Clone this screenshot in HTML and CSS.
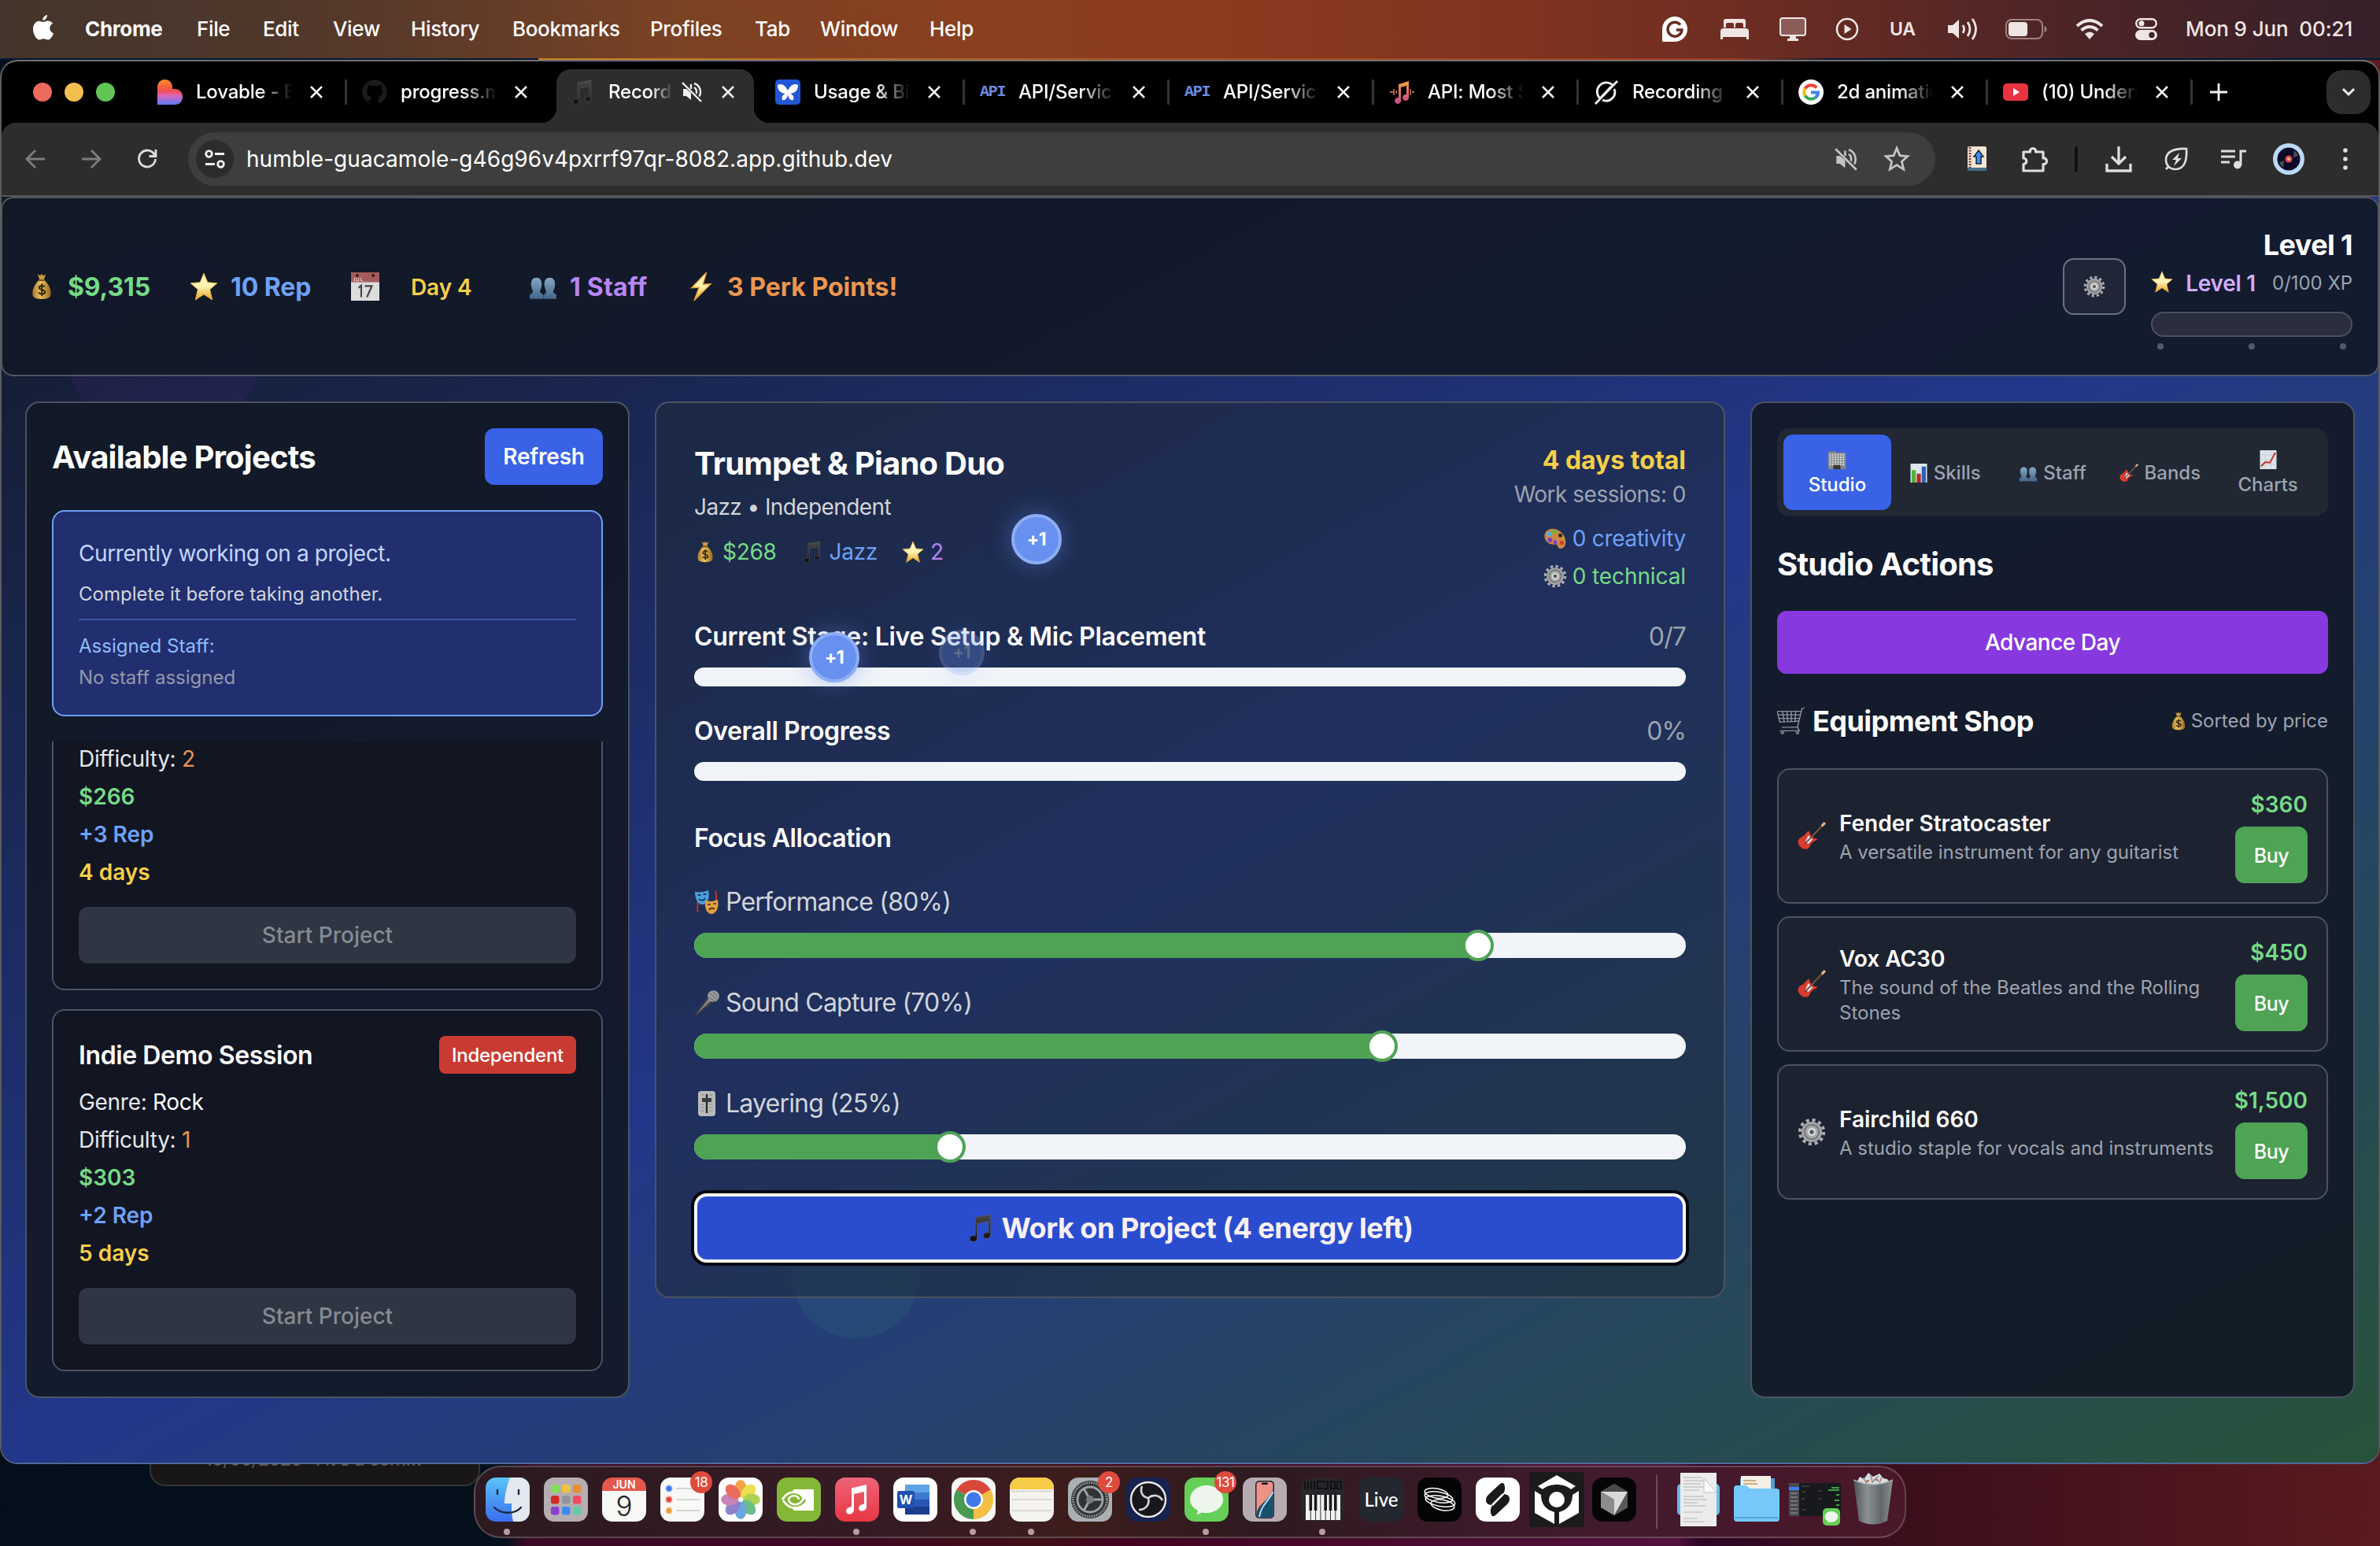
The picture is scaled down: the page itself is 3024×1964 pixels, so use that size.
FILE: index.html
```html
<!DOCTYPE html>
<html lang="en">
<head>
<meta charset="utf-8">
<title>Recording Studio Tycoon</title>
<link rel="stylesheet" href="styles.css">
</head>
<body>
<svg class="sprite" aria-hidden="true">
  <defs>
    <linearGradient id="gGold" x1="0" y1="0" x2="0" y2="1"><stop offset="0" stop-color="#fff7c4"/><stop offset=".5" stop-color="#fdf3b4"/><stop offset="1" stop-color="#e8a020"/></linearGradient>
    <linearGradient id="gBag" x1="0" y1="0" x2="1" y2="0"><stop offset="0" stop-color="#a87a2c"/><stop offset=".45" stop-color="#ecc463"/><stop offset="1" stop-color="#94661e"/></linearGradient>
    <linearGradient id="gNote" x1="0" y1="0" x2="0" y2="1"><stop offset="0" stop-color="#4a4a4a"/><stop offset="1" stop-color="#0c0c10"/></linearGradient>
    <linearGradient id="gStaff" x1="0" y1="0" x2="0" y2="1"><stop offset="0" stop-color="#86a7c2"/><stop offset="1" stop-color="#43668c"/></linearGradient>
    <linearGradient id="gLove" x1="0" y1="0" x2="0" y2="1"><stop offset="0" stop-color="#f98a2b"/><stop offset=".45" stop-color="#f0504e"/><stop offset=".65" stop-color="#d667c0"/><stop offset="1" stop-color="#5b7bf5"/></linearGradient>
    <linearGradient id="gSunset" x1="0" y1="0" x2="0" y2="1"><stop offset="0" stop-color="#f2a03d"/><stop offset="1" stop-color="#c4458c"/></linearGradient>
    <linearGradient id="gTrash" x1="0" y1="0" x2="1" y2="0"><stop offset="0" stop-color="#4d5256"/><stop offset=".35" stop-color="#8c9196"/><stop offset=".7" stop-color="#62676b"/><stop offset="1" stop-color="#8a8f94"/></linearGradient>
  </defs>
  <symbol id="bag" viewBox="0 0 32 32"><path d="M11 1l3 2 2-2 2 2 3-2-2.500 7h-5z" fill="#c99a44"/><path d="M13 8h6c5 5 8 10 8 16 0 5-3 7-11 7S5 29 5 24c0-6 3-11 8-16z" fill="url(#gBag)"/><path d="M12.500 8.500h7" stroke="#7c5519" stroke-width="2"/><path d="M19.500 16.500c-1-2-6.500-2-6.500 1 0 3.500 7 1.500 7 5 0 3-6.500 3-7.500.500M16.200 12.500v15" stroke="#3a2a0c" stroke-width="2" fill="none"/></symbol>
  <symbol id="star" viewBox="0 0 32 32"><path d="M16 1l4.300 10.300L31 12.200l-8.200 7.200L25.500 31 16 24.800 6.500 31l2.700-11.600L1 12.200l10.700-.900z" fill="url(#gGold)" stroke="#eeb53c" stroke-width=".8"/></symbol>
  <symbol id="cal" viewBox="0 0 32 32"><path d="M0 0h32v32H0z" fill="#dcdcdc"/><path d="M0 0h32v11H0z" fill="#a35c5c"/><circle cx="7" cy="3.500" r="1.800" fill="#3c1d1d"/><circle cx="25" cy="3.500" r="1.800" fill="#3c1d1d"/><path d="M4 6v3.500H2.500M6 6v3.500h2.500V6M11 6v3.500h2.500" stroke="#e3b9b9" fill="none"/><path d="M8.500 17.500L11.500 15v13M15.500 15.500h8L18 28" stroke="#444" stroke-width="1.900" fill="none"/></symbol>
  <symbol id="staff" viewBox="0 0 32 32"><path d="M8.500 6c4 0 6 3 6 7 0 5-2 7-2 9 0 2 4 2 4 4v4H1v-4c0-2 3.500-2 3.500-4 0-2-2-4-2-9 0-4 2-7 6-7z" fill="url(#gStaff)"/><path d="M23.500 6c4 0 6 3 6 7 0 5-2 7-2 9 0 2 3.500 2 3.500 4v4H17v-4c0-2 2.500-2 2.500-4 0-2-2-4-2-9 0-4 2-7 6-7z" fill="url(#gStaff)"/></symbol>
  <symbol id="bolt" viewBox="0 0 32 32"><path d="M21 0L4 17.500l8.500-.500L7 32l19-19-9 .500z" fill="url(#gGold)" stroke="#e79a2a" stroke-width="1.200"/></symbol>
  <symbol id="gear" viewBox="0 0 32 32"><circle cx="16" cy="16" r="13.500" fill="none" stroke="#a9abae" stroke-width="3.600" stroke-dasharray="3.700 3.370"/><circle cx="16" cy="16" r="11.600" fill="#a4a6a8"/><circle cx="16" cy="16" r="8.200" fill="none" stroke="#707275" stroke-width="1.600"/><circle cx="16" cy="16" r="4.800" fill="#d5d6d8"/><circle cx="16" cy="16" r="2.300" fill="#4f5154"/></symbol>
  <symbol id="note" viewBox="0 0 32 32"><path d="M10 4l17-3v23.500a4 3.400 0 1 1-2-3V8.500l-13 2.500v17a4.200 3.400 0 1 1-2-3z" fill="url(#gNote)" stroke="#5c5c60" stroke-width=".6"/></symbol>
  <symbol id="palette" viewBox="0 0 32 32"><path d="M14 3C5 2 0 9 2 16s10 9 14 8c3-.500 3 2 4 4 2 3 7 2 9-2C33 18 27 5 14 3z" fill="#c98b3f"/><circle cx="8" cy="10" r="3" fill="#42b4e6"/><circle cx="15" cy="7" r="2.800" fill="#5ac03b"/><circle cx="9" cy="18" r="3" fill="#7d3ad6"/><circle cx="16" cy="21" r="2.600" fill="#7d3ad6"/><circle cx="23" cy="12" r="2.600" fill="#302010"/><circle cx="25" cy="22" r="2.800" fill="#d53b33"/></symbol>
  <symbol id="masks" viewBox="0 0 32 32"><path d="M27 2c3 8-1 14 1 22M4 16c2 5-2 8 1 13" stroke="#b33a24" stroke-width="2" fill="none"/><path d="M1 3c6 1 12 0 17-2 2 9 0 17-7 18C5 20 1 12 1 3z" fill="#4b9fe0"/><path d="M4.500 7h4M11.500 6h4M6 12c3 3 6 2 8-1" stroke="#123" stroke-width="1.600" fill="none"/><path d="M14 14c5 2 11 1 16-1 2 10-2 18-8 18s-9-8-8-17z" fill="#e2a03f"/><path d="M17 19h4M24 18h4M19 26c2-3 5-3 7-1" stroke="#421" stroke-width="1.600" fill="none"/></symbol>
  <symbol id="mic" viewBox="0 0 32 32"><path d="M18 8l7 7L4 32l-4-1z" fill="#3c3c40"/><path d="M19 10l3 3L3 30z" fill="#85858a"/><circle cx="24.500" cy="7.500" r="7.300" fill="#98999c"/><path d="M20 4l9 8M24 2l6 6M19 9l7 5" stroke="#5d5e61"/></symbol>
  <symbol id="fader" viewBox="0 0 32 32"><rect x="5" y="0" width="22" height="32" rx="4" fill="#b9babc"/><path d="M8.500 5h4M8.500 9h4M8.500 17h4M8.500 21h4M8.500 25h4M19.500 5h4M19.500 9h4M19.500 17h4M19.500 21h4M19.500 25h4" stroke="#88898c" stroke-width="1.200"/><path d="M16 4v24" stroke="#28292b" stroke-width="2.400"/><rect x="10" y="9" width="12" height="5" rx="1" fill="#37383b"/></symbol>
  <symbol id="building" viewBox="0 0 32 32"><path d="M1 2h14v2h16v28H1z" fill="#85898a"/><path d="M4.500 6v20M9 6v20M13.500 6v20M18 6v20M22.500 6v20M27 6v20" stroke="#d4dadd" stroke-width="2.600" stroke-dasharray="3 1.200"/><path d="M10 25h12v7H10z" fill="#3b3632"/></symbol>
  <symbol id="bars" viewBox="0 0 32 32"><path d="M2 0h28v32H2z" fill="#dfe6ec"/><path d="M4 11h7v21H4z" fill="#50b33a"/><path d="M12.500 17h7v15h-7z" fill="#b52a22"/><path d="M21 5h7v27h-7z" fill="#2b62bf"/></symbol>
  <symbol id="guitar" viewBox="0 0 32 32"><path d="M15 18L28 4" stroke="#6f5138" stroke-width="2"/><path d="M26.500 3.500L30 0l2 2-4 4z" fill="#e7b98a"/><path d="M11 11c2-1 3 0 3 3l5 5c3-1 4 1 2 2-3 1-6 3-7 6-1 4-6 5-10 2s-5-8-1-11c4-2 6-4 8-7z" fill="#dd3a2e"/><path d="M12 15l5 5-5 5-3-3z" fill="#e8e4e0"/><path d="M8 25l8-8" stroke="#555" stroke-width="1.600"/></symbol>
  <symbol id="chart" viewBox="0 0 32 32"><path d="M2 0h28v32H2z" fill="#dde4ea"/><path d="M2 8h28M2 16h28M2 24h28M11 0v32M20 0v32" stroke="#c2ccd6"/><path d="M4 27l7-7 8 1 9-17" stroke="#c2332c" stroke-width="2.600" fill="none"/></symbol>
  <symbol id="cart" viewBox="0 0 32 32"><path d="M31 1l-3 1-5 21H5M0 5l3 12 22-1M0 5h27M6 5l2 12M11 5l1 12M16 5v12M21 5l-1 12M1 9h25M2 13h23M23 23l2 4H3" stroke="#8d9095" stroke-width="1.300" fill="none"/><circle cx="6" cy="29" r="2.200" fill="#6d7074"/><circle cx="23" cy="29" r="2.200" fill="#6d7074"/></symbol>
  <symbol id="close" viewBox="0 0 16 16"><path d="M1 1l14 14M15 1L1 15" stroke="#f2f2f2" stroke-width="2.500"/></symbol>
  <symbol id="mute" viewBox="0 0 28 28"><path d="M3 10h4l6 5v9l-6-5H3z" fill="currentColor"/><path d="M13 4v6M17 8c2 1 3 3 3 6 0 .800 0 1.500-.300 2M17 3c5 1 8 6 8 11 0 2-.500 4-1.500 5.500M2 2l24 24" stroke="currentColor" stroke-width="2.400" fill="none"/></symbol>
  <symbol id="chat" viewBox="0 0 56 56"><rect width="56" height="56" rx="13" fill="#66cf58"/><path d="M28 10c12 0 21 8 21 17.500S40 45 28 45c-2 0-4 0-6-.800-2 1.500-4 2.300-7 2.500 1.500-1.500 2-3 2-5-6-3-10-8-10-14C7 18 16 10 28 10z" fill="#eef5ec"/></symbol>
</svg>

<header class="menubar">
  <nav class="menus">
    <svg class="apple" viewBox="0 0 26 32"><path fill="#fff" d="M18 0c.300 3-2.500 6.800-5.600 6.800C12 3.700 15 .300 18 0zM13 9c1.500 0 3-1.500 6-1.500 2.500 0 4.800 1.300 6 3.300-5.500 3.200-4.500 10.500 1 12.600C24.500 27.500 21.800 31.500 19 31.500c-2.200 0-3-1.300-5.600-1.300s-3.500 1.300-5.400 1.300C4.500 31.500 0 24.500 0 18 0 11.500 3.800 7.700 7.800 7.700 10 7.700 11.800 9 13 9z"/></svg>
    <span class="app">Chrome</span><span>File</span><span>Edit</span><span>View</span><span>History</span><span>Bookmarks</span><span>Profiles</span><span>Tab</span><span>Window</span><span>Help</span>
  </nav>
  <div class="status">
    <svg width="32" height="32" viewBox="0 0 32 32"><path d="M16 0a16 16 0 1 1 0 32H0V16A16 16 0 0 1 16 0z" fill="#fff"/><path d="M23 10.500a9 9 0 1 0 2 6.500h-7" stroke="#6a2b23" stroke-width="3.400" fill="none"/></svg>
    <svg width="36" height="26" viewBox="0 0 36 26"><path d="M4 11V3q0-3 3-3h22q3 0 3 3v8h-3V7q0-2-2-2h-6q-2 0-2 2v4h-2V7q0-2-2-2H9Q7 5 7 7v4zM0 26V16q0-4 4-4h28q4 0 4 4v10h-3v-3H3v3z" fill="#efe6e4"/></svg>
    <svg width="34" height="30" viewBox="0 0 34 30"><rect x="1" y="1" width="32" height="22" rx="3" fill="#8b5e59" stroke="#efe6e4" stroke-width="2"/><path d="M13 23h8v4h3v3H10v-3h3z" fill="#efe6e4"/></svg>
    <svg width="30" height="30" viewBox="0 0 30 30"><circle cx="15" cy="15" r="13" fill="none" stroke="#efe6e4" stroke-width="2.500"/><path d="M11.500 9l9 6-9 6z" fill="#efe6e4"/></svg>
    <b>UA</b>
    <svg width="40" height="30" viewBox="0 0 40 30"><path d="M0 10h6l8-7v24l-8-7H0z" fill="#efe6e4"/><path d="M19 10q3 5 0 10M25 6q6 9 0 18M31 2q9 13 0 26" stroke="#efe6e4" stroke-width="2.800" fill="none"/></svg>
    <svg width="53" height="26" viewBox="0 0 53 26"><rect x="1" y="1" width="46" height="24" rx="7" fill="none" stroke="#a18280" stroke-width="2"/><rect x="4" y="4" width="24" height="18" rx="4" fill="#efe6e4"/><path d="M49.500 9q3 1 3 4t-3 4z" fill="#a18280"/></svg>
    <svg width="36" height="26" viewBox="0 0 36 26"><path d="M2 9q16-14 32 0M7.500 14.500q10.500-9 21 0" stroke="#efe6e4" stroke-width="4" fill="none"/><path d="M12 19q6-5 12 0l-6 7z" fill="#efe6e4"/></svg>
    <svg width="28" height="28" viewBox="0 0 28 28"><rect x="1.200" y="1.200" width="25.600" height="11" rx="5.500" fill="none" stroke="#efe6e4" stroke-width="2.400"/><circle cx="8" cy="6.700" r="3.500" fill="#efe6e4"/><rect y="15" width="28" height="13" rx="6.500" fill="#efe6e4"/><circle cx="21" cy="21.500" r="3.700" fill="#40222a"/></svg>
    <span class="clock">Mon 9 Jun&nbsp; 00:21</span>
  </div>
</header>

<div class="ghost"><span>10/06/2025&nbsp;&nbsp; I It's a com…</span></div>

<main class="window">
  <div class="tabstrip">
    <div class="lights"><i class="red"></i><i class="amber"></i><i class="green"></i></div>
    <div class="tab"><svg class="fav" viewBox="0 0 32 32"><path d="M0 10C0 4 4 0 9.500 0S19 4 19 10v2h3c6 0 10 4 10 10s-4 10-10 10H0z" fill="url(#gLove)"/></svg><span class="title">Lovable - Bu</span><svg class="x"><use href="#close"/></svg></div>
    <div class="tab"><svg class="fav" viewBox="0 0 32 32"><circle cx="16" cy="16" r="15.500" fill="#1c1c1e"/><path d="M11 31v-5c-4 1-5-2-6.500-3M21 31v-6c0-1.500-.500-2.500-1-3 4-.500 6-3 6-7 0-2-.500-3-1.500-4.200.300-1.500.200-3-.300-4-1.500 0-3 .700-4.200 1.700-2.500-.600-5.500-.600-8 0C10.800 7.500 9.300 6.800 7.800 6.800c-.500 1-.600 2.500-.300 4C6.500 12 6 13 6 15c0 4 2 6.500 6 7-.500.500-1 1.500-1 3v6z" fill="#000"/></svg><span class="title">progress.md</span><svg class="x"><use href="#close"/></svg></div>
    <div class="tab active"><svg class="fav"><use href="#note"/></svg><span class="title short">Recordin</span><svg class="tabmute"><use href="#mute"/></svg><svg class="x"><use href="#close"/></svg></div>
    <div class="tab"><svg class="fav" viewBox="0 0 32 32"><rect width="32" height="32" rx="5" fill="#2257d6"/><path d="M16 14C12 6 7 5 3 7c0 6 3 10 10 11-4 1-5 5-4 8 4 1 6-2 7-7 1 5 3 8 7 7 1-3 0-7-4-8 7-1 10-5 10-11-4-2-9-1-13 7z" fill="#fff"/></svg><span class="title">Usage &amp; Bil</span><svg class="x"><use href="#close"/></svg></div>
    <div class="tab"><span class="fav api">API</span><span class="title">API/Service</span><svg class="x"><use href="#close"/></svg></div>
    <div class="tab"><span class="fav api">API</span><span class="title">API/Service</span><svg class="x"><use href="#close"/></svg></div>
    <div class="tab"><svg class="fav" viewBox="0 0 32 32"><path d="M12 6l13-4v20a4 4 0 1 1-3-3V8l-7 2v16a4 4 0 1 1-3-3z" fill="url(#gSunset)"/><path d="M1 16h4M6 12v8M9 14v4M27 12v8M29 16h3" stroke="#b06a4a" stroke-width="1.800"/></svg><span class="title">API: Most Sta</span><svg class="x"><use href="#close"/></svg></div>
    <div class="tab"><svg class="fav" viewBox="0 0 32 32"><path d="M24 7A11 11 0 0 0 8 24M26 12A11 11 0 0 1 11 26M30 2L2 31M22 9L9 23" stroke="#eee" stroke-width="2.800" fill="none"/></svg><span class="title">Recording S</span><svg class="x"><use href="#close"/></svg></div>
    <div class="tab"><svg class="fav" viewBox="0 0 32 32"><circle cx="16" cy="16" r="16" fill="#fff"/><g fill="none" stroke-width="4"><path d="M23 10.500A9 9 0 0 0 8.500 11.500" stroke="#ea4335"/><path d="M8.500 11.500a9 9 0 0 0 0 9" stroke="#fbbc05"/><path d="M8.500 20.500A9 9 0 0 0 21.500 23" stroke="#34a853"/><path d="M21.500 23c2-1.500 3.500-4 3.500-6.500h-9" stroke="#4285f4"/></g></svg><span class="title">2d animatio</span><svg class="x"><use href="#close"/></svg></div>
    <div class="tab"><svg class="fav" viewBox="0 0 32 32"><rect y="5" width="32" height="22" rx="5" fill="#ea3340"/><path d="M13 11l8 5-8 5z" fill="#fff"/></svg><span class="title">(10) Unders</span><svg class="x"><use href="#close"/></svg></div>
    <svg class="plus" viewBox="0 0 22 22"><path d="M11 0v22M0 11h22" stroke="#f2f2f2" stroke-width="2.800"/></svg>
    <div class="tabsearch"><svg width="18" height="12" viewBox="0 0 18 12"><path d="M2 2l7 7 7-7" stroke="#eee" stroke-width="3" fill="none"/></svg></div>
  </div>

  <div class="toolbar">
    <svg class="nav dim" viewBox="0 0 26 26"><path d="M25 13H2M13 2L2 13l11 11" /></svg>
    <svg class="nav dim" viewBox="0 0 26 26"><path d="M1 13h23M13 2l11 11-11 11"/></svg>
    <svg class="nav" viewBox="0 0 26 26"><path d="M22.500 8A10.500 10.500 0 1 0 23.500 13M24 1v8.500h-8.500"/></svg>
    <div class="omnibox">
      <span class="site"><svg width="26" height="24" viewBox="0 0 26 24"><g fill="none" stroke="#f0f0f0" stroke-width="2.800"><circle cx="5.500" cy="5.500" r="3.800"/><path d="M13 5.500h12M1 18.500h12"/><circle cx="20.500" cy="18.500" r="3.800"/></g></svg></span>
      <span class="url">humble-guacamole-g46g96v4pxrrf97qr-8082.app.github.dev</span>
      <svg class="omute"><use href="#mute"/></svg>
      <svg class="ostar" viewBox="0 0 32 32"><path d="M16 3l3.700 9 9.300.800-7 6.200 2.200 9.300L16 23.200l-8.200 5.100L10 19l-7-6.200 9.300-.800z" fill="none" stroke="#c4c4c4" stroke-width="2.600"/></svg>
    </div>
    <div class="tools">
      <svg width="24" height="32" viewBox="0 0 24 32"><rect width="24" height="30" rx="2" fill="#f3e6d2"/><path d="M3 1v26" stroke="#7c3b48" stroke-width="3" stroke-dasharray="2 1.500"/><path d="M14 5l6 8h-3v9h-6v-9H8z" fill="#3f8cf0" stroke="#16233f" stroke-width="1.500"/><path d="M0 27h24v4H0z" fill="#47708a"/></svg>
      <svg width="34" height="34" viewBox="0 0 34 34"><path d="M2 8h8.500c-1-6 8-6 7 0H27v8c6-1 6 8.500 0 7.500V32H2v-8.500c5 0 5-7.500 0-7.500z" fill="none" stroke="#dedede" stroke-width="3.200" stroke-linejoin="round"/></svg>
      <i class="bar"></i>
      <svg width="34" height="34" viewBox="0 0 34 34"><path d="M17 1v21M8 14l9 9 9-9M2 23v9h30v-9" fill="none" stroke="#dedede" stroke-width="3.300"/></svg>
      <svg width="32" height="32" viewBox="0 0 32 32"><path d="M3 29l4-4M29 3C15 2 3 6 3 17c0 7 5 12 12 12C27 29 30 17 29 3z" fill="none" stroke="#dedede" stroke-width="2.700"/><path d="M20 8l-9 9h5l-3 8 10-10h-5z" fill="#dedede"/></svg>
      <svg width="32" height="26" viewBox="0 0 32 26"><path d="M0 3h18M0 10h18M0 17h11M25 21V3h7" fill="none" stroke="#dedede" stroke-width="3"/><circle cx="21" cy="20.500" r="5" fill="#dedede"/></svg>
      <svg width="40" height="40" viewBox="0 0 40 40"><circle cx="20" cy="20" r="20" fill="#bcd9f6"/><circle cx="20" cy="20" r="14.500" fill="#0c0b26"/><path d="M27 9a13 13 0 0 1 5 7l-6 2zM13 31a13 13 0 0 1-5-7l6-2z" fill="#4c4b5c"/><circle cx="20" cy="20" r="4.500" fill="#e2455c"/><circle cx="20" cy="20" r="1.800" fill="#ffd76a"/></svg>
      <svg width="6" height="28" viewBox="0 0 6 28"><circle cx="3" cy="3" r="2.800" fill="#dedede"/><circle cx="3" cy="14" r="2.800" fill="#dedede"/><circle cx="3" cy="25" r="2.800" fill="#dedede"/></svg>
    </div>
  </div>

  <div class="page">
    <i class="orb orb-a"></i><i class="orb orb-b"></i>
    <section class="hud">
      <div class="stats">
        <div class="stat s1"><svg><use href="#bag"/></svg><span class="green">$9,315</span></div>
        <div class="stat s2"><svg><use href="#star"/></svg><span class="blue">10 Rep</span></div>
        <div class="stat s3"><svg><use href="#cal"/></svg><span class="yellow">Day 4</span></div>
        <div class="stat s4"><svg><use href="#staff"/></svg><span class="purple">1 Staff</span></div>
        <div class="stat s5"><svg><use href="#bolt"/></svg><span class="orange">3 Perk Points!</span></div>
      </div>
      <div class="hudright">
        <button class="settings"><svg><use href="#gear"/></svg></button>
        <div class="level">
          <h2>Level 1</h2>
          <div class="xp"><svg><use href="#star"/></svg><b>Level 1</b><span>0/100 XP</span></div>
          <div class="xpbar"></div>
          <div class="ticks"><i></i><i></i><i></i></div>
        </div>
      </div>
    </section>

    <div class="columns">
      <section class="panel projects">
        <div class="head"><h2>Available Projects</h2><button class="refresh">Refresh</button></div>
        <div class="notice">
          <p class="lead">Currently working on a project.</p>
          <p class="sub">Complete it before taking another.</p>
          <div class="assigned"><p>Assigned Staff:</p><p class="none">No staff assigned</p></div>
        </div>
        <div class="list">
          <article class="job cut">
            <p>Difficulty: <span class="orange">2</span></p>
            <p class="green b">$266</p><p class="blue b">+3 Rep</p><p class="yellow b">4 days</p>
            <button>Start Project</button>
          </article>
          <article class="job">
            <div class="jobhead"><h3>Indie Demo Session</h3><span class="badge">Independent</span></div>
            <p>Genre: <span class="white">Rock</span></p>
            <p>Difficulty: <span class="orange">1</span></p>
            <p class="green b">$303</p><p class="blue b">+2 Rep</p><p class="yellow b">5 days</p>
            <button>Start Project</button>
          </article>
        </div>
      </section>

      <section class="panel work">
        <div class="workhead">
          <div class="wl">
            <h2>Trumpet &amp; Piano Duo</h2>
            <p class="kind">Jazz • Independent</p>
            <div class="meta"><span class="green"><svg><use href="#bag"/></svg>$268</span><span class="blue"><svg><use href="#note"/></svg>Jazz</span><span class="purple"><svg><use href="#star"/></svg>2</span></div>
          </div>
          <div class="wr">
            <p class="total">4 days total</p><p class="sessions">Work sessions: 0</p>
            <p class="pts blue"><svg><use href="#palette"/></svg>0 creativity</p>
            <p class="pts green tech"><svg><use href="#gear"/></svg>0 technical</p>
          </div>
        </div>
        <div class="row stage"><span>Current Stage: Live Setup &amp; Mic Placement</span><em>0/7</em></div>
        <div class="track"></div>
        <div class="row overall"><span>Overall Progress</span><em>0%</em></div>
        <div class="track"></div>
        <h3 class="focus">Focus Allocation</h3>
        <div class="slider"><label><svg><use href="#masks"/></svg>Performance (80%)</label><div class="rail" style="--v:.8"><i></i><b></b></div></div>
        <div class="slider"><label><svg><use href="#mic"/></svg>Sound Capture (70%)</label><div class="rail" style="--v:.7"><i></i><b></b></div></div>
        <div class="slider"><label><svg><use href="#fader"/></svg>Layering (25%)</label><div class="rail" style="--v:.25"><i></i><b></b></div></div>
        <button class="workbtn"><svg><use href="#note"/></svg>Work on Project (4 energy left)</button>
      </section>

      <section class="panel studio">
        <nav class="tabs5">
          <span class="on"><svg><use href="#building"/></svg>Studio</span>
          <span><svg><use href="#bars"/></svg>Skills</span>
          <span><svg><use href="#staff"/></svg>Staff</span>
          <span><svg><use href="#guitar"/></svg>Bands</span>
          <span class="tall"><svg><use href="#chart"/></svg>Charts</span>
        </nav>
        <h2 class="actions">Studio Actions</h2>
        <button class="advance">Advance Day</button>
        <div class="shophead"><svg><use href="#cart"/></svg><h3>Equipment Shop</h3><span><svg><use href="#bag"/></svg>Sorted by price</span></div>
        <div class="shop">
          <article><svg><use href="#guitar"/></svg><div class="info"><h4>Fender Stratocaster</h4><p>A versatile instrument for any guitarist</p></div><div class="buy"><b>$360</b><button>Buy</button></div></article>
          <article><svg><use href="#guitar"/></svg><div class="info"><h4>Vox AC30</h4><p>The sound of the Beatles and the Rolling Stones</p></div><div class="buy"><b>$450</b><button>Buy</button></div></article>
          <article><svg><use href="#gear"/></svg><div class="info"><h4>Fairchild 660</h4><p>A studio staple for vocals and instruments</p></div><div class="buy"><b>$1,500</b><button>Buy</button></div></article>
        </div>
      </section>
    </div>
    <span class="pop pop-a">+1</span><span class="pop pop-b">+1</span><span class="pop pop-c">+1</span>
  </div>
</main>

<footer class="dockarea">
  <div class="dock">
    <div class="app run"><svg viewBox="0 0 56 56"><defs><linearGradient id="fi" x1="0" y1="0" x2="0" y2="1"><stop offset="0" stop-color="#5ac4f7"/><stop offset="1" stop-color="#3a6df0"/></linearGradient></defs><rect width="56" height="56" rx="13" fill="url(#fi)"/><path d="M31 0h12a13 13 0 0 1 13 13v30a13 13 0 0 1-13 13h-8c-1.500-6-2-12-2-18v-5h-9C24 24 27 10 31 0z" fill="#e3e9f0"/><path d="M15 16v5M42 16v5M11 38c9 9 26 9 34 0" stroke="#1d2b3c" stroke-width="2.400" fill="none" stroke-linecap="round"/></svg></div>
    <div class="app"><svg viewBox="0 0 56 56"><rect width="56" height="56" rx="13" fill="#b6adb2"/><g><rect x="9" y="9" width="10.500" height="10.500" rx="3" fill="#82e05a"/><rect x="23" y="9" width="10.500" height="10.500" rx="3" fill="#f4c13d"/><rect x="37" y="9" width="10.500" height="10.500" rx="3" fill="#ea8d2f"/><rect x="9" y="23" width="10.500" height="10.500" rx="3" fill="#d12c26"/><rect x="23" y="23" width="10.500" height="10.500" rx="3" fill="#8f9598"/><rect x="37" y="23" width="10.500" height="10.500" rx="3" fill="#ef4a5e"/><rect x="9" y="37" width="10.500" height="10.500" rx="3" fill="#8a3fd0"/><rect x="23" y="37" width="10.500" height="10.500" rx="3" fill="#3c8df2"/><rect x="37" y="37" width="10.500" height="10.500" rx="3" fill="#62ccaa"/></g></svg></div>
    <div class="app date"><span>JUN</span><b>9</b></div>
    <div class="app"><svg viewBox="0 0 56 56"><rect width="56" height="56" rx="13" fill="#f8f8f7"/><g stroke-width="1.500"><circle cx="11" cy="14" r="4" fill="#3b79f1" stroke="#a4c0f7"/><circle cx="11" cy="28" r="4" fill="#e34a3d" stroke="#f3b1aa"/><circle cx="11" cy="42" r="4" fill="#ee9a3a" stroke="#f7d3a5"/></g><path d="M20 14h30M20 28h30M20 42h30" stroke="#c9c9c9" stroke-width="1.600"/></svg><em>18</em></div>
    <div class="app"><svg viewBox="0 0 56 56"><rect width="56" height="56" rx="13" fill="#fdfdfd"/><g transform="translate(28 28)" opacity=".88"><ellipse cy="-14" rx="7.500" ry="11" fill="#f3982f"/><ellipse cy="-14" rx="7.500" ry="11" fill="#e8dd34" transform="rotate(45)"/><ellipse cy="-14" rx="7.500" ry="11" fill="#a3cc3c" transform="rotate(90)"/><ellipse cy="-14" rx="7.500" ry="11" fill="#59b578" transform="rotate(135)"/><ellipse cy="-14" rx="7.500" ry="11" fill="#5b9bdc" transform="rotate(180)"/><ellipse cy="-14" rx="7.500" ry="11" fill="#7f72c4" transform="rotate(225)"/><ellipse cy="-14" rx="7.500" ry="11" fill="#c074ae" transform="rotate(270)"/><ellipse cy="-14" rx="7.500" ry="11" fill="#e9574a" transform="rotate(315)"/></g></svg></div>
    <div class="app"><svg viewBox="0 0 56 56"><rect width="56" height="56" rx="13" fill="#85b737"/><path d="M21 15h26v27H21v-5c7 1 13-2 16-8-4-6-9-9-16-9z" fill="#fff"/><path d="M7 28c4-7 11-11 18-9 5 1 8 5 9 8-3 5-8 8-13 7-4-1-6-4-6-7 2-3 6-5 10-3 2 1 3 3 3 4" fill="none" stroke="#fff" stroke-width="2.600"/><path d="M8 29c4 7 10 10 17 10" stroke="#fff" stroke-width="2.600" fill="none"/></svg></div>
    <div class="app run"><svg viewBox="0 0 56 56"><defs><linearGradient id="mu" x1="0" y1="0" x2="0" y2="1"><stop offset="0" stop-color="#ee6478"/><stop offset="1" stop-color="#e63743"/></linearGradient></defs><rect width="56" height="56" rx="13" fill="url(#mu)"/><path d="M21 13.500L40 9v28c0 3-2 5-5 5.500s-5-1-5-3.500 2-4.500 5-5l2-.500V18l-13 3v19c0 4-2 6-5 6.500S14 45 14 42.500s2-4.500 5-5l2-.500z" fill="#fff"/></svg></div>
    <div class="app"><svg viewBox="0 0 56 56"><rect width="56" height="56" rx="13" fill="#fff"/><path d="M15 9h31v10H15z" fill="#5ba3e6"/><path d="M15 19h31v9H15z" fill="#3c7ad2"/><path d="M15 28h31v9H15z" fill="#2856b4"/><path d="M15 37h31v10H15z" fill="#1c3c8c"/><rect x="5" y="17" width="22" height="22" rx="2.500" fill="#1f50b0"/></svg><strong class="w">W</strong></div>
    <div class="app run"><svg viewBox="0 0 56 56"><rect width="56" height="56" rx="13" fill="#f6f6f6"/><path d="M28 28L6.300 15.500A25 25 0 0 1 49.700 15.500z" fill="#d8483b"/><path d="M28 28V53A25 25 0 0 1 6.300 15.500z" fill="#479a50"/><path d="M28 28L49.700 15.500A25 25 0 0 1 28 53z" fill="#f3c044"/><path d="M28 16h22l-.5-1H18z" fill="#d8483b"/><circle cx="28" cy="28" r="12" fill="#fff"/><circle cx="28" cy="28" r="9.500" fill="#4079e8"/></svg></div>
    <div class="app run"><svg viewBox="0 0 56 56"><rect width="56" height="56" rx="13" fill="#f4f3f0"/><path d="M0 15v-2A13 13 0 0 1 13 0h30a13 13 0 0 1 13 13v2z" fill="#f6cb45"/><path d="M2 17.500h52" stroke="#b5b0a4" stroke-width="1.400" stroke-dasharray="1.500 1.500"/><path d="M2 28h52M2 42h52" stroke="#d6d4cf" stroke-width="1.400"/></svg></div>
    <div class="app"><svg viewBox="0 0 56 56"><rect width="56" height="56" rx="13" fill="#a9b0b3"/><circle cx="28" cy="28" r="24" fill="#303334"/><circle cx="28" cy="28" r="21.500" fill="none" stroke="#8d9193" stroke-width="3" stroke-dasharray="1.800 1.200"/><circle cx="28" cy="28" r="16" fill="none" stroke="#9ea2a4" stroke-width="3"/><path d="M28 28h17M28 28l-8-14M28 28l-8 14" stroke="#9ea2a4" stroke-width="3"/><circle cx="28" cy="28" r="5" fill="#777b7d"/></svg><em>2</em></div>
    <div class="app"><svg viewBox="0 0 56 56"><rect width="56" height="56" rx="13" fill="#17224e"/><circle cx="28" cy="28" r="22" fill="#18171c" stroke="#e8e8ea" stroke-width="2.400"/><path d="M20 11c-3 8 1 14 8 15 6-5 14-4 18 3M28 26c2 8-3 15-12 15" stroke="#d7d7da" stroke-width="2.600" fill="none"/></svg></div>
    <div class="app run"><svg><use href="#chat"/></svg><em class="wide">131</em></div>
    <div class="app"><svg viewBox="0 0 56 56"><rect width="56" height="56" rx="13" fill="#b7abb2"/><rect x="16" y="4" width="24" height="48" rx="5" fill="#1e2632"/><rect x="17.500" y="5.500" width="21" height="45" rx="4" fill="#ee9285"/><path d="M38.500 14C34 30 20 32 17.500 46v.500a4 4 0 0 0 4 4h13a4 4 0 0 0 4-4z" fill="#17506e"/><path d="M38.500 18C33 30 24 34 21 50" stroke="#b7dbe8" stroke-width="2" fill="none"/><rect x="24" y="6.500" width="8" height="2.600" rx="1.300" fill="#111"/></svg></div>
    <div class="app run"><svg viewBox="0 0 56 56"><rect x="1" y="1" width="54" height="54" rx="11" fill="#26272a"/><path d="M5 5v10M9 5v10M13 5v10M17 5v10M38 5h5v9h-5zM46 5h5v9h-5zM21 5h13v9H21z" stroke="#0d0d0f" stroke-width="1.600" fill="none"/><path d="M6 22h44v32H6z" fill="#f2f2f2"/><path d="M12.300 22v32M18.600 22v32M24.900 22v32M31.200 22v32M37.500 22v32M43.800 22v32" stroke="#333"/><path d="M12.300 22v20M18.600 22v20M31.200 22v20M37.500 22v20M43.800 22v20" stroke="#1a1a1c" stroke-width="3.600"/></svg></div>
    <div class="app live"><span>Live</span></div>
    <div class="app"><svg viewBox="0 0 56 56"><rect width="56" height="56" rx="13" fill="#050505"/><g fill="none" stroke="#fff" stroke-width="1.500"><ellipse cx="24" cy="20" rx="15" ry="6" transform="rotate(10 24 20)"/><ellipse cx="27" cy="25" rx="18" ry="6.500" transform="rotate(10 27 25)"/><ellipse cx="29" cy="30" rx="19" ry="6.500" transform="rotate(10 29 30)"/><ellipse cx="32" cy="35" rx="15" ry="6.500" transform="rotate(10 32 35)"/></g></svg></div>
    <div class="app"><svg viewBox="0 0 56 56"><rect width="56" height="56" rx="13" fill="#fff"/><path d="M35 7c-2 0-3 0-4 1L16 22c-4 4-4 10 0 12l4 1 12-11c5-4 7-12 3-17z" fill="#191a1c"/><path d="M21 49c2 0 3 0 4-1l15-14c4-4 4-10 0-12l-4-1-12 11c-5 4-7 12-3 17z" fill="#191a1c"/><path d="M35 21L21 35" stroke="#fff" stroke-width="2.500"/></svg></div>
    <div class="app big"><svg viewBox="0 0 70 70"><rect width="70" height="70" rx="3" fill="#1b1b1b"/><path d="M35 4l24 14-6 4c-9-8-27-8-36 0l-6-4zM7 24l8 5c0 10 5 17 12 20l5 2v15L7 52zM63 24l-8 5c0 10-5 17-12 20l-5 2v15l25-14z" fill="#fff"/><circle cx="35" cy="35" r="10" fill="#fff"/></svg></div>
    <div class="app"><svg viewBox="0 0 56 56"><rect width="56" height="56" rx="13" fill="#050505"/><path d="M28 8l17 10v20L28 48 11 38V18z" fill="#6f6f6f"/><path d="M28 8l17 10H11z" fill="#4a4a4a"/><path d="M11 18h34L28 48V28z" fill="#d9d9d9"/><path d="M11 18l17 10v20L11 38z" fill="#8c8c8c"/><path d="M45 18v20L28 48z" fill="#5a5a5a"/></svg></div>
    <i class="div"></i>
    <div class="item docs"><svg viewBox="0 0 54 68"><rect y="14" width="54" height="40" rx="5" fill="#6bbbe8"/><path d="M4 0h46v68H4z" fill="#ececec"/><path d="M8 6h24M8 10h30M8 14h22M8 18h28M8 22h20M8 30h26M8 34h30M8 38h18M8 42h28M8 50h24M8 58h18M8 62h26" stroke="#b4b4b4"/><path d="M34 7l16 18H34z" fill="#fafafa" stroke="#c5c5c5"/></svg></div>
    <div class="item folder"><svg viewBox="0 0 58 58"><path d="M8 3h44v20H8z" fill="#4b9fd3"/><path d="M9 0h38v18H9z" fill="#f4efe8"/><path d="M12 6h16M12 10h18" stroke="#c09a60" stroke-width="1.600"/><path d="M0 16q0-4 4-4h10q3 0 6 4h34q4 0 4 4v34q0 4-4 4H4q-4 0-4-4z" fill="#77c8fa"/><path d="M1 53h56" stroke="#54a6dc" stroke-width="2"/></svg></div>
    <div class="item thumb"><svg viewBox="0 0 66 54"><path d="M0 0h66v42H0z" fill="#17191c"/><path d="M0 0h13v42H0z" fill="#4a4b50"/><path d="M0 5h13v4H0z" fill="#3b82f6"/><path d="M2 13h9M2 18h9M2 23h9M2 28h9M2 33h9M2 38h9" stroke="#85868b" stroke-width="1.500"/><path d="M54 6h10M50 9h14M60 15h4M58 22h6M60 28h4" stroke="#4fd05c" stroke-width="1.600"/><path d="M16 4h10M16 11h5M16 20h4M16 34h5M38 10h4M38 20h4" stroke="#55575c"/><use href="#chat" x="43" y="32" width="22" height="22"/></svg></div>
    <div class="item trash"><svg viewBox="0 0 50 66"><path d="M3 14l5-9 5 3 6-8 6 5 8-4 5 6 5 1 5 8z" fill="#d9dcdf"/><path d="M12 6l5 7M22 3l2 9 8-8M36 5l-3 8" stroke="#8a8f95" stroke-width="1.500" fill="none"/><path d="M27 8l5 2M16 11l4-1" stroke="#c0653f" stroke-width="2"/><path d="M0 9q25 12 50 0L43 61q-18 9-36 0z" fill="url(#gTrash)"/><path d="M0 9q25 12 50 0" stroke="#a5aaae" stroke-width="1.500" fill="none"/></svg></div>
  </div>
</footer>
</body>
</html>
```
FILE: styles.css
```css
* { box-sizing: border-box; margin: 0; padding: 0; }
html, body { width: 3024px; height: 1964px; overflow: hidden; }
body {
  position: relative;
  display: flex;
  flex-direction: column;
  font-family: Inter, "Liberation Sans", sans-serif;
  font-size: 28px;
  line-height: 40px;
  color: #fff;
  background: linear-gradient(90deg, #03101b 0, #04111d 640px, #3a0a24 670px, #400624 1040px, #401016 1330px, #420320 1400px, #50123c 2130px, #2c0624 2160px, #3c0f1c 2420px, #5a1a1e 3024px);
}
.sprite { position: absolute; width: 0; height: 0; }
svg { display: block; flex: none; }
button { font: inherit; color: inherit; border: 0; display: block; }
em { font-style: normal; }
p, span, h2, h3, h4, b { white-space: nowrap; }
.green { color: #76da87; }
.blue { color: #6ea1f6; }
.yellow { color: #f6cf47; }
.purple { color: #b986f5; }
.orange { color: #ec9650; }
.white { color: #fff; }

/* macOS menu bar */
.menubar {
  height: 76px;
  flex: none;
  display: flex;
  justify-content: space-between;
  padding-bottom: 2px;
  font-size: 26px;
  font-weight: 500;
  letter-spacing: -.35px;
  background:
    linear-gradient(90deg, #43352b 0, #50372b 360px, #633c28 620px, #7a4224 850px, #8a3f20 1220px, #8c3b1f 1512px, #80331f 1930px, #6a2c23 2250px, #4f2526 2600px, #35202a 3024px) 0 0 / 100% 74px no-repeat,
    linear-gradient(90deg, #041a33 684px, #c98224 684px, #a85224 1512px, #a03a20 2200px, #041a33 2330px);
}
.menus { display: grid; grid-template-columns: 66px 142px 84px 89px 99px 129px 175px 133px 83px 139px 80px; align-items: center; padding-left: 42px; }
.menus .app { font-weight: 700; }
.apple { width: 26px; height: 32px; margin-top: -4px; }
.status { display: grid; grid-template-columns: 74px 75px 71px 69px 74px 73px 89px 76px 64px 211px; align-items: center; padding-right: 36px; color: #efe6e4; }
.status b { font-size: 23px; font-weight: 600; }
.clock { letter-spacing: -.1px; }

.ghost { position: absolute; left: 190px; top: 1834px; width: 420px; height: 54px; background: #191616; border: 2px solid #333; border-radius: 0 0 20px 20px; }
.ghost span { display: block; padding-left: 68px; font-size: 24px; line-height: 36px; letter-spacing: -.8px; color: #5d5958; }

/* browser window */
.window {
  position: relative;
  height: 1784px;
  flex: none;
  display: flex;
  flex-direction: column;
  border: 2px solid #5c5c5e;
  border-top-color: #707070;
  border-bottom-color: #53689b;
  border-radius: 22px;
  overflow: hidden;
  background: #000;
}
.tabstrip { height: 78px; flex: none; display: flex; align-items: center; padding-left: 40px; position: relative; }
.lights { display: flex; gap: 16px; width: 140px; }
.lights i { width: 24px; height: 24px; border-radius: 50%; }
.red { background: #ec6a5e; }
.amber { background: #f5bf4f; }
.lights .green { background: #61c554; }
.tab { position: relative; width: 260px; flex: none; height: 68px; margin-top: 10px; display: flex; align-items: center; padding: 0 0 11px 18px; font-size: 24px; font-weight: 500; letter-spacing: -.2px; }
.tab::after { content: ""; position: absolute; right: 1px; top: 13px; width: 3px; height: 32px; background: #333; }
.tab.active, .tab.active + .tab { z-index: 1; }
.tab.active { background: #2d2d2d; border-radius: 18px 18px 0 0; width: 251px; margin-left: 5px; margin-right: 9px; padding-left: 17px; }
.tab.active::after, .tab:nth-child(3)::after { display: none; }
.tab.active::before { content: ""; position: absolute; left: -20px; right: -20px; bottom: 0; height: 20px; background: radial-gradient(circle at 0 0, transparent 20px, #2d2d2d 20.500px) 0 0 / 20px 20px no-repeat, radial-gradient(circle at 100% 0, transparent 20px, #2d2d2d 20.500px) 100% 0 / 20px 20px no-repeat; }
.fav { width: 32px; height: 32px; flex: none; }
.fav.api { font: 700 20px/32px "Liberation Mono", monospace; color: #6c8ce0; letter-spacing: -1.200px; }
.title { width: 122px; margin-left: 17px; overflow: hidden; -webkit-mask-image: linear-gradient(90deg, #000 65%, transparent); mask-image: linear-gradient(90deg, #000 65%, transparent); }
.title.short { width: 82px; }
.tabmute { width: 28px; height: 28px; margin-left: 10px; margin-right: 1px; color: #f0f0f0; }
.x { width: 16px; height: 16px; margin-left: 23px; }
.plus { width: 22px; height: 22px; margin-left: 21px; }
.tabsearch { width: 56px; height: 56px; margin-left: auto; margin-right: 10px; border-radius: 20px; background: #2d2d2d; display: grid; place-items: center; }
.toolbar { height: 94px; flex: none; display: flex; align-items: center; padding-left: 30px; background: #2d2d2d; border-bottom: 2px solid #565656; border-radius: 18px 18px 0 0; }
.nav { width: 26px; height: 26px; margin-right: 46px; fill: none; stroke: #dcdcdc; stroke-width: 2.800; }
.nav.dim { stroke: #7d7d7d; margin-right: 45px; }
.omnibox { width: 2220px; height: 68px; margin-left: -7px; border-radius: 34px; background: #3e3e3e; display: flex; align-items: center; padding: 0 32px 0 10px; color: #c4c4c4; }
.site { width: 48px; height: 48px; border-radius: 50%; background: #2c2c2c; display: grid; place-items: center; }
.url { margin-left: 16px; flex: 1; font-size: 28px; color: #fff; letter-spacing: .05px; }
.omute { width: 31px; height: 31px; }
.ostar { width: 34px; height: 34px; margin-left: 32px; }
.tools { flex: 1; display: grid; grid-template-columns: 69px 67px 39px 74px 73px 66px 89px auto; align-items: center; padding-left: 41px; }
.bar { width: 4px; height: 32px; background: #101010; }

/* game page */
.page { position: relative; flex: 1; background: linear-gradient(to bottom right, #131a28 0, #23378a 50%, #28533a 100%); }
.orb { position: absolute; border-radius: 50%; }
.orb-a { left: 80px; top: 60px; width: 252px; height: 252px; background: rgba(147, 51, 234, .08); }
.orb-b { left: 1003px; top: 1286px; width: 164px; height: 164px; background: rgba(52, 160, 120, .12); }
.hud { position: relative; height: 228px; margin: 0 -1px; display: flex; justify-content: space-between; align-items: center; border: 2px solid #4f5662; border-radius: 16px; background: rgba(18, 24, 38, .91); padding: 0 32px 0 33px; }
.stats { display: flex; font-size: 32px; font-weight: 700; letter-spacing: -.1px; }
.stat { display: flex; align-items: center; gap: 16px; }
.stat span { padding-top: 2px; }
.stat svg { width: 36px; height: 36px; }
.s1 { width: 205px; } .s1 svg { width: 34px; height: 34px; }
.s2 { width: 205px; }
.s3 { width: 226px; gap: 40px; font-size: 28px; font-weight: 600; }
.s4 { width: 202px; } .s4 span { letter-spacing: .2px; } .s5 { gap: 14px; } .s5 span { letter-spacing: 0; }
.hudright { display: flex; gap: 32px; align-items: center; }
.settings { width: 80px; height: 72px; border: 2px solid #6b7280; border-radius: 14px; background: #202538; display: grid; place-items: center; }
.settings svg { width: 28px; height: 28px; }
.level { width: 256px; margin-top: 2px; }
.level h2 { font-size: 36px; line-height: 50px; font-weight: 700; text-align: right; letter-spacing: -.6px; }
.xp { display: flex; justify-content: space-between; align-items: center; height: 44px; padding-top: 4px; }
.xp svg { width: 28px; height: 28px; margin-top: -4px; }
.xp b { font-size: 28px; font-weight: 600; color: #cfaefa; margin-left: -5px; letter-spacing: -.3px; }
.xp span { font-size: 24px; color: #9ca3af; letter-spacing: -.05px; }
.xpbar { height: 32px; margin-top: 16px; border: 2px solid #4b5160; border-radius: 16px; background: #2a2e3f; }
.ticks { display: flex; justify-content: space-between; padding: 8px 8px 0; }
.ticks i { width: 8px; height: 8px; border-radius: 50%; background: #555a67; }

.columns { position: relative; display: flex; align-items: flex-start; gap: 32px; padding: 32px 0 0 30px; letter-spacing: -.3px; }
.panel { flex: none; border: 2px solid #4b5260; border-radius: 18px; background: rgba(18, 24, 37, .91); }
h2 { font-size: 40px; font-weight: 700; letter-spacing: -.78px; }

.projects { width: 768px; height: 1266px; padding: 32px; }
.head { display: flex; justify-content: space-between; align-items: center; height: 72px; }
.head h2 { padding-top: 1px; }
.refresh { width: 150px; height: 72px; border-radius: 12px; background: #3962e6; font-weight: 600; letter-spacing: -.2px; }
.notice { height: 262px; margin-top: 32px; border: 2px solid #6f9ff5; border-radius: 16px; background: #212f70; padding: 33px 32px 0; }
.lead { color: #c2d6fb; letter-spacing: -.42px; }
.sub { margin-top: 15px; font-size: 24px; line-height: 34px; color: #d1d5db; letter-spacing: .02px; }
.assigned { margin-top: 14px; border-top: 2px solid #3a539f; padding-top: 13px; font-size: 24px; color: #8fbcf9; letter-spacing: 0; }
.assigned .none { color: #9399aa; }
.list { height: 800px; margin-top: 32px; }
.job { border: 2px solid #4b5260; border-radius: 16px; background: #121522; padding: 32px; height: 460px; color: #e5e7eb; }
.job p { margin-bottom: 8px; }
.job .b { font-weight: 600; letter-spacing: 0; }
.job.cut { height: 316px; padding-top: 2px; border-top: 0; border-radius: 0 0 16px 16px; margin-bottom: 24px; }
.job button { width: 100%; height: 72px; margin-top: 24px; border-radius: 12px; background: #2f3542; color: #858a93; font-weight: 500; letter-spacing: 0; }
.jobhead { height: 48px; display: flex; justify-content: space-between; align-items: center; margin-bottom: 16px; }
.jobhead h3 { padding-top: 2px; font-size: 32px; font-weight: 600; letter-spacing: -.4px; color: #fff; }
.badge { width: 174px; height: 48px; border-radius: 8px; background: #c93b32; font-size: 24px; line-height: 49px; font-weight: 500; letter-spacing: -.25px; color: #fff; text-align: center; }

.work { width: 1360px; height: 1139px; padding: 48px; background: rgba(31, 41, 55, .53); }
.workhead { display: flex; justify-content: space-between; height: 220px; }
.wl h2 { line-height: 58px; }
.kind { margin-top: 6px; color: #d1d5db; letter-spacing: -.6px; }
.meta { display: flex; margin-top: 17px; }
.meta span { display: flex; align-items: center; }
.meta svg { width: 28px; height: 28px; margin-right: 8px; }
.meta span + span { margin-left: 31px; }
.wr { text-align: right; padding-top: 3px; }
.total { font-size: 32px; line-height: 44px; font-weight: 700; color: #f6cf47; letter-spacing: 0; }
.sessions { margin-top: 1px; color: #9ca3af; letter-spacing: -.5px; }
.pts { display: flex; justify-content: flex-end; align-items: center; gap: 7px; margin-top: 16px; }
.pts svg { width: 30px; height: 30px; }
.tech { margin-top: 8px; letter-spacing: -.1px; }
.row { display: flex; justify-content: space-between; font-size: 32px; line-height: 48px; font-weight: 600; letter-spacing: -.28px; }
.row em { font-weight: 400; color: #9ca3af; letter-spacing: -.9px; }
.stage { margin-top: 5px; }
.track { height: 24px; margin-top: 15px; border-radius: 12px; background: #f1f5f9; }
.overall { margin-top: 33px; letter-spacing: -.4px; }
.focus { margin-top: 49px; font-size: 32px; line-height: 48px; font-weight: 600; letter-spacing: -.4px; }
.slider { height: 128px; padding-top: 33px; }
.slider label { display: flex; align-items: center; gap: 8px; height: 48px; font-size: 32px; color: #d1d5db; letter-spacing: -.8px; }
.slider label svg { width: 32px; height: 32px; }
.rail { position: relative; height: 32px; margin-top: 15px; border-radius: 16px; background: #f1f5f9; }
.rail i { display: block; height: 32px; width: calc(var(--v) * 100%); border-radius: 16px 0 0 16px; background: #4ea355; }
.rail b { position: absolute; top: -4px; left: calc(var(--v) * (100% - 40px)); width: 40px; height: 40px; border: 4px solid #4ea355; border-radius: 50%; background: #fff; }
.workbtn { width: 100%; height: 88px; margin-top: 43px; border: 4px solid #fff; border-radius: 16px; background: #2a4dd0; box-shadow: 0 0 0 4px #04060f; display: flex; align-items: center; justify-content: center; gap: 8px; font-size: 36px; font-weight: 700; letter-spacing: -.48px; color: #fbf1f4; }
.workbtn svg { width: 36px; height: 36px; }

.studio { width: 768px; height: 1266px; padding: 32px; }
.tabs5 { height: 112px; padding: 8px; border-radius: 16px; background: #212833; display: grid; grid-template-columns: repeat(5, 1fr); font-size: 24px; font-weight: 500; letter-spacing: 0; color: #9ca3af; }
.tabs5 span { display: flex; align-items: center; justify-content: center; gap: 7px; line-height: 32px; padding-top: 2px; }
.tabs5 svg { width: 24px; height: 24px; }
.tabs5 .on, .tabs5 .tall { flex-direction: column; border-radius: 12px; gap: 4px; padding-top: 4px; }
.tabs5 .on { background: #3962e6; color: #fff; }
.actions { margin-top: 33px; line-height: 56px; }
.advance { width: 100%; height: 80px; margin-top: 31px; border-radius: 12px; background: #8739df; font-weight: 500; letter-spacing: -.5px; }
.shophead { display: flex; align-items: center; margin-top: 32px; height: 56px; }
.shophead > svg { width: 36px; height: 36px; margin-right: 9px; }
.shophead h3 { font-size: 36px; font-weight: 700; letter-spacing: -.55px; margin-right: auto; }
.shophead span { display: flex; align-items: center; gap: 4px; font-size: 24px; letter-spacing: 0; color: #9ca3af; }
.shophead span svg { width: 24px; height: 24px; }
.shop { display: flex; flex-direction: column; gap: 16px; margin-top: 32px; letter-spacing: 0; }
.shop article { height: 172px; border: 2px solid #4b5260; border-radius: 16px; background: #1c2230; padding: 24px; display: flex; align-items: center; }
.shop article > svg { width: 36px; height: 36px; margin-right: 17px; }
.info { flex: 1; }
.info h4 { font-size: 28px; font-weight: 600; letter-spacing: 0; }
.info p { font-size: 24px; line-height: 32px; margin-top: 1px; margin-bottom: -1px; color: #9ca3af; white-space: normal; letter-spacing: 0; width: 480px; }
.buy { width: 92px; display: flex; flex-direction: column; align-items: flex-end; gap: 8px; }
.buy b { font-weight: 600; color: #76da87; }
.buy button { width: 92px; height: 72px; padding-top: 1px; border-radius: 12px; background: #4ea355; font-size: 25px; font-weight: 500; letter-spacing: -.4px; }

.pop { position: absolute; width: 64px; height: 64px; border-radius: 50%; border: 4px solid #8eadf5; background: #6790f0; box-shadow: 0 0 30px rgba(96, 140, 240, .45); font-size: 23px; line-height: 56px; font-weight: 700; letter-spacing: -.5px; text-align: center; }
.pop-a { left: 1283px; top: 403px; }
.pop-b { left: 1026px; top: 553px; }
.pop-c { left: 1191px; top: 550px; width: 58px; height: 58px; line-height: 50px; font-size: 21px; opacity: .3; }

/* dock */
.dockarea { position: relative; flex: 1; display: flex; justify-content: center; padding-top: 2px; }
.dock { width: 1820px; height: 92px; border: 2px solid rgba(255, 255, 255, .2); border-radius: 34px; background: linear-gradient(90deg, #2c1a20 0, #351a24 500px, #3d1d1c 760px, #2e1a20 1000px, #421a2e 1420px, #4a1728 1820px); display: flex; align-items: flex-start; padding: 13px 0 0 13px; }
.dock .app { position: relative; width: 56px; height: 56px; margin-right: 18px; flex: none; }
.dock .app svg { width: 56px; height: 56px; }
.run::after { content: ""; position: absolute; left: 23px; top: 65px; width: 8px; height: 8px; border-radius: 50%; background: #b79aa4; }
.dock em { position: absolute; right: -10px; top: -8px; min-width: 28px; height: 28px; border-radius: 14px; background: #df4a3d; font-size: 17px; line-height: 28px; letter-spacing: -.5px; text-align: center; }
.date { border-radius: 13px; background: linear-gradient(#e4584d 17px, #f7f7f5 17px); overflow: hidden; text-align: center; }
.date span { display: block; font-size: 14px; font-weight: 600; line-height: 18px; }
.date b { display: block; font-size: 35px; font-weight: 300; line-height: 36px; color: #222; }
.w { position: absolute; left: 5px; top: 17px; width: 22px; font-size: 16px; line-height: 22px; text-align: center; }
.live { border-radius: 13px; background: #23272f; text-align: center; }
.live span { font: 500 24px/56px Lato, sans-serif; }
.dock .big { width: 70px; height: 70px; margin: -7px 10px 0 -6px; }
.dock .big svg { width: 70px; height: 70px; }
.div { width: 2px; height: 68px; margin: -3px 25px 0 7px; background: #6f4a5c; }
.item > svg { width: 100%; height: 100%; }
.docs { width: 54px; height: 68px; margin: -6px 18px 0 0; }
.folder { width: 58px; height: 58px; margin: -2px 12px 0 0; }
.thumb { width: 66px; height: 54px; margin: 7px 16px 0 0; }
.trash { width: 50px; height: 66px; margin-top: -6px; }
```
